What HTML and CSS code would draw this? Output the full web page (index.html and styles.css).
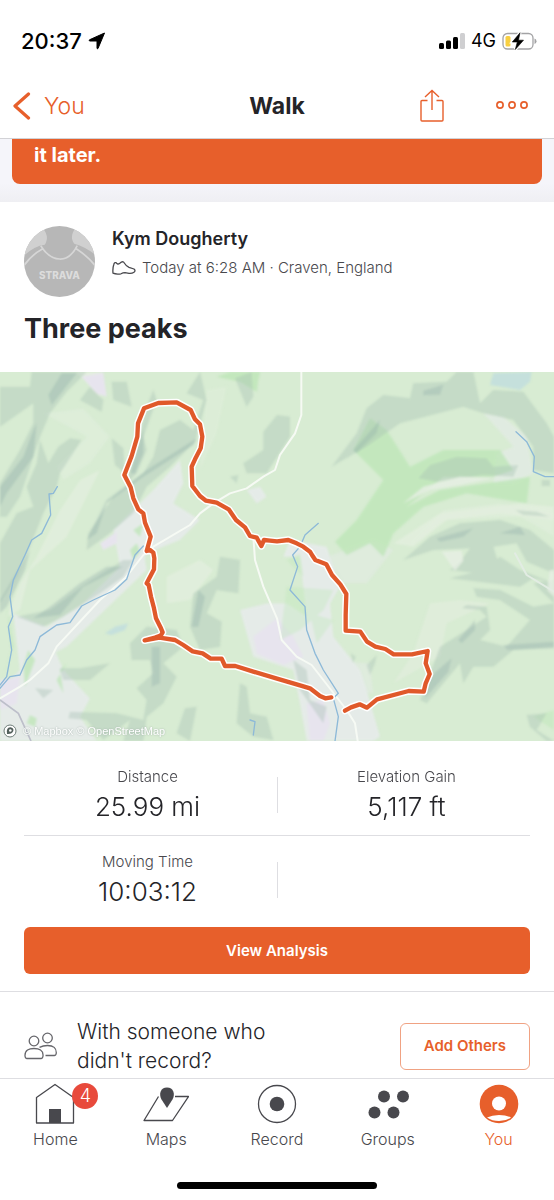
FILE: index.html
```
<!DOCTYPE html>
<html lang="en">
<head>
<meta charset="utf-8">
<meta name="viewport" content="width=device-width, initial-scale=1">
<title>Walk</title>
<link rel="stylesheet" href="styles.css">
</head>
<body>
<div class="screen">
  <header class="top">
    <div class="status">
      <div class="status-side">
        <span class="clock">20:37</span>
        <svg width="18" height="18" viewBox="0 0 18 18" aria-hidden="true"><path d="M16.500 1 10 16.500Q9.300 17.500 9 16V9H2Q.4 8.700 1.500 7.800Z" fill="#000" stroke="#000" stroke-linejoin="round"/></svg>
      </div>
      <div class="status-side">
        <svg width="26" height="16" viewBox="0 0 26 16" aria-hidden="true">
          <rect x="0" y="10" width="5" height="6" rx="1.500"/><rect x="7" y="7.500" width="5" height="8.500" rx="1.500"/><rect x="14" y="4" width="5" height="12" rx="1.500"/><rect x="21" y="0" width="5" height="16" rx="1.500" fill="#cfcfd1"/>
        </svg>
        <span class="network">4G</span>
        <svg width="35" height="18" viewBox="0 0 35 18" aria-hidden="true">
          <rect x="1" y="1.500" width="30" height="15.500" rx="4.500" fill="none" stroke="#a3a3a5" stroke-width="1.300"/>
          <rect x="3.500" y="4" width="5" height="10.500" rx="1.500" fill="#f8cf41"/>
          <path d="M32.500 6.500q2 .6 2 2.700t-2 2.700z" fill="#a3a3a5"/>
          <path d="M18 .8 10.300 10h5l-2 7.500L21.500 8.200h-5z" stroke="#fff" stroke-width="3" fill="#fff"/>
          <path d="M18 .8 10.300 10h5l-2 7.500L21.500 8.200h-5z" stroke="#000" stroke-width=".6"/>
        </svg>
      </div>
    </div>
    <nav class="navbar" aria-label="Activity">
      <a class="back" href="#you">
        <svg width="18" height="30" viewBox="0 0 18 30" aria-hidden="true"><path d="M15.500 3 2 15l13.500 12" fill="none" stroke="currentColor" stroke-width="3.200" stroke-linecap="round" stroke-linejoin="round"/></svg>
        You
      </a>
      <h1 class="nav-title">Walk</h1>
      <div class="nav-actions">
        <button class="icon-button" type="button" aria-label="Share">
          <svg width="24" height="34" viewBox="0 0 24 34" fill="none" stroke="currentColor" stroke-width="1.400"><path d="M7.500 11.500H2a1 1 0 0 0-1 1V31a1 1 0 0 0 1 1h20a1 1 0 0 0 1-1V12.500a1 1 0 0 0-1-1h-5.500M12 21V2M5 8l7-6.500L19 8"/></svg>
        </button>
        <button class="icon-button" type="button" aria-label="More">
          <svg width="32" height="10" viewBox="0 0 32 10" fill="none" stroke="currentColor" stroke-width="1.700"><circle cx="4" cy="4" r="3.100"/><circle cx="16" cy="4" r="3.100"/><circle cx="28" cy="4" r="3.100"/></svg>
        </button>
      </div>
    </nav>
  </header>

  <main class="feed">
    <div class="notice-strip"><p class="notice">it later.</p></div>

    <section class="activity">
      <div class="athlete">
        <svg class="avatar" viewBox="0 0 72 72" role="img" aria-label="Profile picture">
          <defs><clipPath id="disc"><circle cx="36" cy="36" r="36"/></clipPath></defs>
          <g clip-path="url(#disc)">
            <rect width="72" height="72" fill="#b7b7b7"/>
            <path d="M17 0Q27 10 21 19 11 20 0 30V0ZM54 0Q45 10 51 18 62 21 72 29V0Z" fill="#d0d0d0"/>
            <path d="M17 20Q25 33 36 33.500T54 20M19 23Q8 29 0 40M53 23Q65 31 72 40" fill="none" stroke="#d6d6d6" stroke-width="1.700"/>
            <text class="jersey" x="36" y="54" text-anchor="middle">STRAVA</text>
          </g>
        </svg>
        <div class="athlete-info">
          <h2 class="name">Kym Dougherty</h2>
          <p class="meta">
            <svg width="24" height="14" viewBox="0 0 24 14" fill="none" stroke="#48484d" stroke-width="1.300" stroke-linejoin="round" aria-hidden="true"><path d="M1 12.200Q.5 7 1.800 3.500 2.500 1 4 1.700 5.500 4 7.800 2.300 10 .2 11.500 1 14 5 17 6.300L22 8q2 1.800 0 3.200-2 1.400-5 1.100l-4-.6q-2 0-4 1.100-5 .7-8-.6Z"/></svg>
            Today at 6:28 AM · Craven, England
          </p>
        </div>
      </div>
      <h2 class="activity-title">Three peaks</h2>
    </section>

    <figure class="map">
      <svg class="map-art" viewBox="0 6 1662 1107" role="img" aria-label="Route map">
        <defs>
          <filter id="soft" x="-10%" y="-10%" width="120%" height="120%"><feGaussianBlur stdDeviation="3"/></filter>
          <path id="route" d="M994 982 976 985 960 978 930 955 900 946 831 926 760 905 706 888 675 888 665 866 632 866 608 850 578 844 550 825 525 810 478 803 434 811 465 803 482 797 488 787 483 775 468 745 462 715 453 680 446 645 440 640 462 598 463 565 460 548 450 540 440 543 452 500 435 458 430 430 415 418 400 385 392 352 373 315 395 258 412 200 414 160 432 115 475 99 530 97 572 120 585 148 600 163 607 200 602 235 585 268 575 290 577 348 600 378 618 392 650 398 686 418 708 450 735 472 750 498 770 503 784 528 792 510 810 512 831 514 865 510 890 520 910 530 930 545 936 555 946 570 979 583 996 615 1021 643 1039 672 1037 735 1037 782 1081 785 1101 815 1126 830 1156 837 1181 853 1236 853 1283 843 1277 880 1289 912 1277 940 1271 965 1226 963 1131 988 1101 1013 1079 1003 1053 1012 1035 1022"/>
        </defs>
        <rect y="6" width="1662" height="1107" fill="#d8ecd3"/>
        <g filter="url(#soft)">
          <g fill="#e4efdf">
            <path d="M230 6H310L300 80Z"/><path d="M130 130 250 115 330 200 270 280 190 330 170 290 260 200Z" opacity=".5"/>
            <path d="M180 420 240 330 300 300 250 400 200 500 90 600 60 720 20 740 60 640 110 560Z" opacity=".7"/>
            <path d="M620 60 680 50 650 190 600 300Z" opacity=".4"/>
            <path d="M500 620 600 570 640 600 570 690 500 700Z" opacity=".7"/>
            <path d="M1180 940 1240 850 1290 700 1380 690 1470 700 1340 760 1320 860Z" opacity=".6"/>
            <path d="M1180 520 1320 430 1560 400 1662 410V450L1500 430 1340 450 1240 530Z" opacity=".8"/>
            <path d="M1220 540 1330 450 1560 440 1662 500V430L1500 400 1330 420Z" opacity=".5"/>
          </g>
          <g fill="#e5ebe8">
            <path d="M340 480 460 360 540 270 550 340 520 400 600 450 540 510 440 550 400 630 310 720 200 760 160 830 190 900 270 985 240 1040 290 1113H0V960L70 890 130 780 230 720 290 660 360 590Z"/>
            <path d="M40 730 140 770 250 700 350 620 430 540 440 600 200 830 60 900Z"/>
            <path d="M740 360 780 350 800 380 770 400ZM720 720 800 700 860 700 920 740 900 560 850 560 870 510 980 530 1020 650 990 700 1000 800 1080 900 1100 960 1140 1100 1120 1113H920L900 1000 880 900 760 860Z"/>
            <path d="M1120 510 1180 540 1100 640 1030 640 980 560ZM1110 880 1120 970 1040 960 990 870Z" opacity=".5"/>
            <path d="M1450 130 1510 140 1580 200 1600 310 1540 340 1480 340 1490 250 1540 230Z" opacity=".65"/>
          </g>
          <g fill="#e7e4ee">
            <path d="M245 20 310 8 320 80 290 70Z"/><path d="M760 800 831 745 880 800 910 860 850 885 770 850Z"/>
            <path d="M0 930 60 920 50 1000 0 1020ZM920 1000 970 990 990 1060 970 1113H930ZM300 520l50-35 0 35-40 20Z"/>
          </g>
          <g fill="#bce6b6" opacity=".75">
            <path d="M650 20 690 6H780L770 65 720 35Z"/>
            <path d="M1060 240 1110 145 1160 180 1230 290 1330 240 1500 240 1540 300 1480 320 1330 320 1220 410 1320 360 1590 320 1580 400 1400 370 1270 410 1180 490 1150 560 1110 520 1040 555 1005 515 1070 450 1150 330Z"/>
            <path d="M400 480 430 460 420 500ZM390 540 410 520 420 545 400 570ZM80 1060l10-25 20 10-5 25zM200 880l-30 50 20 40-10-70zM20 700l20 130-30 90 25-80zM85 840l20 30-30 80-5-60z"/>
            <path d="M860 650 1000 660 970 720 900 780 840 810ZM930 730 1000 750 950 820ZM860 570 900 550 910 620Z" opacity=".45"/>
            <path d="M1600 1040 1662 1020V1080Z" opacity=".6"/>
          </g>
          <g fill="#a6c0b3" opacity=".38">
            <path d="M0 50 90 50 95 6H260L200 65 150 130 120 200 90 290 60 380 20 440 0 440V340L60 240 100 160 100 100 0 170Z"/>
            <path d="M120 210 145 280 175 230 210 205 245 210 180 310 170 350 130 430 90 530 50 620 0 700V520L50 430 100 410 80 350 110 280Z"/>
            <path d="M335 35 380 35 395 110 340 90ZM240 90 270 50 310 90 305 125ZM335 205 370 235 375 310 345 285Z"/>
            <path d="M440 110 460 60 470 90 430 200 440 240 410 310 380 340 400 270Z"/>
            <path d="M480 180 540 150 580 180 610 90 560 70 600 6 620 90 585 215 510 290 440 350 400 430 330 490 260 540 265 490 340 380 430 310 460 260Z"/>
            <path d="M50 740 150 720 260 640 370 570 400 570 370 620 300 670 190 740 130 770Z"/>
            <path d="M730 280 790 240 790 185 831 135 870 140 870 200 800 310 740 310ZM705 25 740 110 760 80 755 6ZM690 320 715 315 710 340Z"/>
            <path d="M995 290 1070 190 1100 115 1150 75 1230 85 1240 40 1340 35 1370 6H1420L1440 100 1480 60 1570 65 1610 120 1640 160 1662 200V310L1600 300 1600 230 1540 150 1450 130 1390 110 1200 160 1100 230 1020 275Z"/>
            <path d="M1255 325 1290 285 1370 260 1460 265 1480 290 1555 285 1540 320 1450 315 1310 335Z"/>
            <path d="M1210 570 1290 500 1380 460 1500 450 1590 480 1662 540V610L1580 575 1550 520 1480 530 1500 595 1430 610 1350 600 1380 575 1410 535 1300 540Z"/>
            <path d="M1420 655 1500 660 1600 710 1662 700V830L1540 840 1480 890 1420 890 1390 940 1380 880 1280 1000 1260 990 1320 830 1400 780 1460 740 1440 720 1385 715 1400 705 1460 710 1470 780 1440 810 1520 830 1590 750 1500 690 1430 680Z"/>
            <path d="M1350 625 1450 600 1500 560 1560 600 1662 640 1600 625 1560 650 1350 625ZM1600 640 1662 700V630ZM1580 1035 1640 1030 1610 1080 1662 1113H1640L1590 1070Z"/>
            <path d="M660 560 720 570 715 670 650 660 620 730 665 755 660 830 600 840 570 770 580 670 650 620Z"/>
            <path d="M390 820 440 770 530 780 550 830 490 880 530 920 490 1000 440 1040 430 1113 370 1113 390 1050 310 1110 260 1050 205 1045 210 1025 350 1030 430 1050 440 990 410 955 460 910 450 870 395 870Z"/>
            <path d="M180 895 240 895 330 880 270 930 190 930ZM105 955 160 960 130 985ZM720 940 740 950 750 1030 800 1040 820 1110 760 1100 710 1060ZM555 1015 590 1010 570 1113 530 1090ZM880 870 920 900 930 990 980 1010 970 1060 900 960Z"/>
            <path d="M1545 420 1610 425 1650 440 1570 435ZM1625 330h25v18h-25zM1100 885 1130 855 1125 880 1110 915ZM1052 850l15 10-8 20z"/>
          </g>
          <g fill="#8eaba9" opacity=".32">
            <path d="M185 10 230 10 155 105 145 75ZM100 180l10-20-10 100-80 110-20 40v-60l70-90zM390 310l40-130 0 70-25 60zM260 510l60-120 120-90 150-95-10 20-150 95-110 80-30 90z"/>
            <path d="M100 745 180 735 250 650 370 590 320 590 240 640 150 710ZM575 770l20-110 20 20-20 90zM455 830h25l0 110-25 10zM1060 240l80-90-10 40-60 60zM1310 505l110-30-30 25-70 15zM1500 490l60-20 15 25zM1285 925l70-60-10 40-70 80zM1375 810l50-60 0 30-40 40zM1510 825l152-10v20l-140 5zM0 690l90-150-15 60-55 110-20 20zM1270 62l60-18-10 30-50 2z"/>
          </g>
          <g fill="#c5e0dc"><path d="M1480 10 1595 6 1590 35 1560 60 1470 45ZM315 790l30-20 40-10-10 20-40 15z"/></g>
          <g fill="#e7efe5"><path d="M1210 400 1270 350 1380 320 1480 325 1380 345 1290 360ZM1325 545l60-3 5 30-25 30zM1650 600l12 0v80l-20-20z" opacity=".8"/></g>
        </g>
        <g fill="none" stroke="#f6faf4" stroke-width="6" stroke-linecap="round" stroke-linejoin="round">
          <path d="M904 6V135L885 190 840 255 825 300 790 320 740 355 690 370 640 400 600 430 570 465 460 530 430 555 375 625 300 690 170 830 145 880 90 930 60 950 0 985"/>
          <path d="M760 500 765 570 790 650 831 745 845 810 890 860 935 885 970 930 1040 1020 1065 1060 1073 1113"/>
          <path d="M1545 550 1580 615 1662 665" stroke="#e2ece3"/>
        </g>
        <g fill="none" stroke="#8db9d8" stroke-width="4" stroke-linecap="round" stroke-linejoin="round">
          <path d="M172 350 160 370 147 372 152 435 125 490 95 510 75 555 40 630 30 680 38 740 25 770 35 840 20 920 0 945"/>
          <path d="M430 528 405 555 380 628 345 660 280 690 245 708 210 758 170 765 120 800 105 840 80 870 60 915 30 920 0 955"/>
          <path d="M955 460 915 495 900 530 878 555 893 590 870 660 915 710 920 780 945 850 970 900 1015 970 1000 985 1015 1040 1005 1113"/>
          <path d="M1548 185 1580 215 1603 260 1600 305 1635 320H1662M750 1050l15 5-5 40"/>
        </g>
        <path d="M0 990 55 1030 93 1113" fill="none" stroke="#bdbfca" stroke-width="5"/>
        <g fill="none" stroke-linecap="round" stroke-linejoin="round">
          <use href="#route" stroke="#fff" stroke-width="22"/>
          <use href="#route" stroke="#e0592a" stroke-width="13"/>
        </g>
      </svg>
      <figcaption class="credit">
        <svg width="14" height="14" viewBox="0 0 14 14" aria-hidden="true"><circle cx="7" cy="7" r="6" fill="#fff" stroke="#6c7a75"/><path d="M4 10Q3 3 7.500 3.300 11 4 10.300 7 9 10.500 4 10Z" fill="#53605c"/><circle cx="7.300" cy="6.500" r="1.300" fill="#fff"/></svg>
        <span>© Mapbox © OpenStreetMap</span>
      </figcaption>
    </figure>

    <section class="stats">
      <dl class="stat-row">
        <div class="stat"><dt>Distance</dt><dd>25.99 mi</dd></div>
        <div class="stat"><dt>Elevation Gain</dt><dd>5,117 ft</dd></div>
      </dl>
      <dl class="stat-row">
        <div class="stat"><dt>Moving Time</dt><dd>10:03:12</dd></div>
        <div class="stat"></div>
      </dl>
      <button class="primary" type="button">View Analysis</button>
    </section>

    <section class="companions">
      <svg width="33" height="28" viewBox="0 0 33 28" fill="none" stroke="#66666b" stroke-width="1.300" aria-hidden="true"><circle cx="10" cy="9" r="4.800"/><circle cx="23.500" cy="6" r="4.800"/><path d="M3 26.500q-1.800 0-2-2.500C.7 18 5 16.500 10 16.500S19.500 18 19 24q-.2 2.500-2 2.500ZM15.500 15.300Q19 13.500 23.500 13.500 32.500 13.500 32.300 21q-.2 2.500-2 2.500H21.500"/></svg>
      <p class="prompt">With someone who didn't record?</p>
      <button class="outline" type="button">Add Others</button>
    </section>
  </main>

  <footer class="bottom">
    <nav class="tabs" aria-label="Main">
      <a class="tab" href="#home">
        <span class="tab-icon">
          <svg width="40" height="42" viewBox="0 0 40 42" aria-hidden="true"><path d="M1.500 40V14.500L20 1.500l18.500 13V40Z" fill="none" stroke="#48484d" stroke-width="1.300" stroke-linejoin="round"/><path d="M14 26h12v14H14z" fill="#48484d"/></svg>
          <span class="badge">4</span>
        </span>
        Home
      </a>
      <a class="tab" href="#maps">
        <span class="tab-icon"><svg width="46" height="42" viewBox="0 0 46 42" aria-hidden="true"><path d="M15.500 13.500 1 37.500H29.500L45.500 13.500H32" fill="none" stroke="#48484d" stroke-width="1.300" stroke-linejoin="round"/><path d="M24 25 18.500 16.500C15.500 11 17.500 4.500 24 4.500S32.500 11 29.500 16.500Z" fill="#48484d"/></svg></span>
        Maps
      </a>
      <a class="tab" href="#record">
        <span class="tab-icon"><svg width="42" height="42" viewBox="0 0 42 42" aria-hidden="true"><circle cx="21" cy="21" r="18.500" fill="none" stroke="#48484d" stroke-width="1.300"/><circle cx="21" cy="21" r="7.300" fill="#48484d"/></svg></span>
        Record
      </a>
      <a class="tab" href="#groups">
        <span class="tab-icon"><svg width="42" height="42" viewBox="0 0 42 42" fill="#48484d" aria-hidden="true"><circle cx="17" cy="13.500" r="6"/><circle cx="36" cy="13.500" r="6"/><circle cx="7.500" cy="29.500" r="6"/><circle cx="26.500" cy="29.500" r="6"/></svg></span>
        Groups
      </a>
      <a class="tab tab-active" href="#you" aria-current="page">
        <span class="tab-icon"><svg width="42" height="42" viewBox="0 0 42 42" aria-hidden="true"><circle cx="21" cy="21" r="19.300" fill="#e75f2b"/><circle cx="21" cy="20.500" r="7" fill="#fff"/><path d="M9 34.500Q14 32 21 32t12 2.500Q28 38 21 38T9 34.500Z" fill="#fff"/></svg></span>
        You
      </a>
    </nav>
    <div class="home-indicator"></div>
  </footer>
</div>
</body>
</html>
```
FILE: styles.css
```
* { box-sizing: border-box; }

body {
  margin: 0;
  background: #fff;
  color: #242428;
  font-family: Inter, "Liberation Sans", sans-serif;
  font-size: 16px;
  line-height: 20px;
}

h1, h2, p, dl, dd, figure { margin: 0; }
a { color: inherit; text-decoration: none; }
button { font: inherit; cursor: pointer; }
svg { display: block; flex: none; }

.screen {
  display: flex;
  flex-direction: column;
  min-height: 100vh;
}

.top { border-bottom: 1px solid #d2d2d6; }

.status {
  display: flex;
  justify-content: space-between;
  align-items: center;
  height: 74px;
  padding: 8px 17px 0 21px;
  color: #000;
}
.status-side { display: flex; align-items: center; gap: 6px; }
.clock { font-size: 22px; font-weight: 500; }
.network { font-size: 18px; }

.navbar {
  display: grid;
  grid-template-columns: 1fr auto 1fr;
  align-items: center;
  height: 64px;
  padding: 0 13px;
}
.back {
  display: flex;
  align-items: center;
  gap: 13px;
  color: #e75f2b;
  font-size: 23px;
  font-weight: 300;
}
.nav-title { font-size: 23px; font-weight: 700; line-height: 28px; }
.nav-actions {
  display: flex;
  align-items: center;
  justify-content: flex-end;
  gap: 52px;
  padding-right: 13px;
}
.icon-button {
  padding: 0;
  border: 0;
  background: none;
  color: #e75f2b;
}

.notice-strip {
  padding: 0 12px 18px;
  background: linear-gradient(#f5f5fa 70%, #efeff3);
}
.notice {
  padding: 4px 22px 17px;
  border-radius: 0 0 8px 8px;
  background: #e75f2b;
  color: #fff;
  font-size: 20px;
  font-weight: 700;
  line-height: 24px;
}

.activity { padding: 24px 24px 26px; }
.athlete { display: flex; gap: 17px; }
.avatar { width: 71px; height: 71px; }
.jersey {
  fill: #dcdcdc;
  font-size: 10px;
  font-weight: 800;
}
.name { font-size: 18px; font-weight: 600; line-height: 26px; }
.meta {
  display: flex;
  align-items: center;
  gap: 6px;
  margin-top: 6px;
  color: #48484d;
  font-size: 15px;
  font-weight: 300;
}
.activity-title {
  margin-top: 15px;
  font-size: 27px;
  font-weight: 700;
  line-height: 34px;
}

.map { position: relative; }
.map-art { width: 100%; height: auto; }
.credit {
  position: absolute;
  left: 3px;
  bottom: 3px;
  display: flex;
  align-items: center;
  gap: 6px;
  color: #fff;
  font-family: "Liberation Sans", sans-serif;
  font-size: 11px;
  line-height: 14px;
  text-shadow: 0 0 2px #9aa9a4;
}

.stats { padding: 0 24px 17px; }
.stat-row {
  display: grid;
  grid-template-columns: 1fr 1fr;
  gap: 12px;
}
.stat-row:first-child { border-bottom: 1px solid #dedee2; }
.stat {
  position: relative;
  padding: 16px 0 20px;
  text-align: center;
}
.stat-row:first-child .stat { padding: 26px 0 13px; }
.stat + .stat::before {
  content: "";
  position: absolute;
  top: 26px;
  left: -6px;
  width: 1px;
  height: 36px;
  background: #dedee2;
}
.stat-row:first-child .stat + .stat::before { top: 36px; }
.stat dt {
  color: #48484d;
  font-size: 15px;
  font-weight: 300;
  line-height: 20px;
}
.stat dd {
  margin-top: 5px;
  font-size: 26px;
  font-weight: 300;
  line-height: 30px;
}
.primary {
  width: 100%;
  height: 47px;
  border: 0;
  border-radius: 6px;
  background: #e75f2b;
  color: #fff;
  font-size: 15px;
  font-weight: 600;
}

.companions {
  display: flex;
  align-items: center;
  gap: 20px;
  padding: 25px 24px 3px;
  border-top: 1px solid #dedee2;
}
.prompt {
  flex: 1;
  max-width: 220px;
  font-size: 21px;
  font-weight: 300;
  line-height: 29px;
}
.outline {
  margin-left: auto;
  height: 47px;
  padding: 0 23px;
  border: 1px solid #f0a283;
  border-radius: 6px;
  background: #fff;
  color: #e75f2b;
  font-size: 15px;
  font-weight: 600;
}

.bottom {
  margin-top: auto;
  border-top: 1px solid #dedee2;
  background: #fff;
}
.tabs {
  display: grid;
  grid-template-columns: repeat(5, 1fr);
  padding-top: 4px;
}
.tab {
  display: flex;
  flex-direction: column;
  align-items: center;
  gap: 2px;
  height: 99px;
  color: #48484d;
  font-size: 16px;
  font-weight: 300;
  line-height: 24px;
}
.tab-active { color: #e75f2b; }
.tab-icon { position: relative; }
.badge {
  position: absolute;
  top: 0;
  right: -23px;
  width: 26px;
  height: 26px;
  border-radius: 50%;
  background: #e84a3c;
  color: #fff;
  font-size: 18px;
  line-height: 26px;
  text-align: center;
}
.home-indicator {
  width: 36%;
  height: 7px;
  margin: 0 auto 12px;
  border-radius: 4px;
  background: #000;
}
```
